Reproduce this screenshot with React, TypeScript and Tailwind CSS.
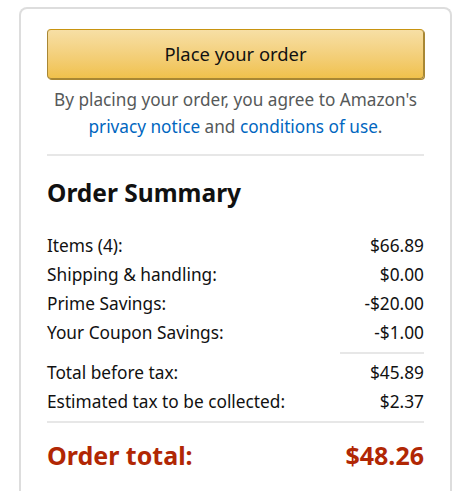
import React from 'react';

const rows = [
  { label: 'Items (4):', value: '$66.89' },
  { label: 'Shipping & handling:', value: '$0.00' },
  { label: 'Prime Savings:', value: '-$20.00' },
  { label: 'Your Coupon Savings:', value: '-$1.00' },
];

const taxRows = [
  { label: 'Total before tax:', value: '$45.89' },
  { label: 'Estimated tax to be collected:', value: '$2.37' },
];

function Row({ label, value }: { label: string; value: string }) {
  return (
    <div className="flex justify-between items-center h-[29px] text-[17.3px] text-[#111]">
      <span>{label}</span>
      <span>{value}</span>
    </div>
  );
}

export default function App() {
  return (
    <div className="min-h-[491px] bg-white pt-[7px] pl-[19px]" style={{ fontFamily: '"Noto Sans", "Open Sans", sans-serif' }}>
      <div className="w-[433px] h-[520px] border-2 border-b-0 border-[#dddddd] rounded-t-[8px] px-[26px] pt-[20px]">
        <button className="w-full h-[50px] rounded-[4px] border border-[#a88734] border-t-[#c89411] shadow-[1px_1px_0_#a88734] bg-gradient-to-b from-[#f7dfa5] to-[#f0c14b] text-[18.4px] text-[#111]">
          Place your order
        </button>
        <p className="mt-[7px] text-center text-[17.2px] leading-[27px] text-[#565959]">
          By placing your order, you agree to Amazon's{' '}
          <span className="text-[#0066c0]">privacy notice</span> and{' '}
          <span className="text-[#0066c0]">conditions of use</span>.
        </p>
        <div className="mt-[14px] h-[2px] bg-[#e7e7e7]" />
        <h2 className="mt-[19px] text-[24.5px] leading-[36px] font-bold text-[#111]">Order Summary</h2>
        <div className="mt-[20px]">
          {rows.map(r => (
            <Row key={r.label} {...r} />
          ))}
        </div>
        <div className="mt-[5px] ml-auto w-[84px] h-[2px] bg-[#e7e7e7]" />
        <div className="mt-[4px]">
          {taxRows.map(r => (
            <Row key={r.label} {...r} />
          ))}
        </div>
        <div className="mt-[5px] h-[2px] bg-[#e7e7e7]" />
        <div className="mt-[15px] flex justify-between items-center h-[36px] text-[25px] font-bold text-[#b12704]">
          <span>Order total:</span>
          <span>$48.26</span>
        </div>
      </div>
    </div>
  );
}
